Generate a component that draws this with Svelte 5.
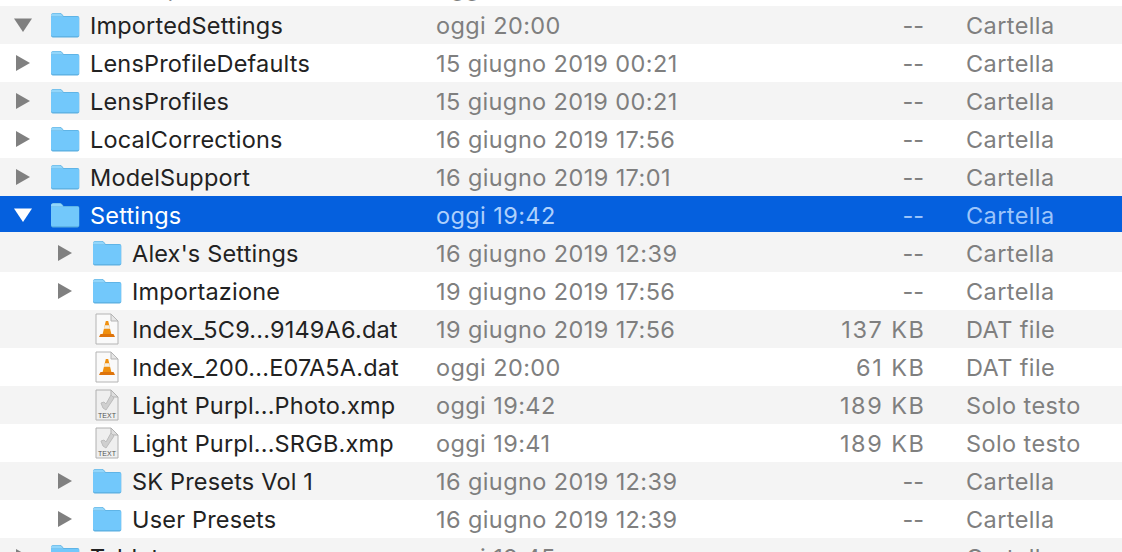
<script lang="ts">
	// Finder list view: one row per item, indented by depth
	type Row = {
		name: string;
		date: string;
		size: string;
		kind: string;
		icon: 'folder' | 'vlc' | 'text';
		depth: number;
		arrow?: 'open' | 'closed';
		selected?: boolean;
	};

	const rows: Row[] = [
		{ name: 'Develop', date: 'oggi 20:00', size: '--', kind: 'Cartella', icon: 'folder', depth: 0, arrow: 'closed' },
		{ name: 'ImportedSettings', date: 'oggi 20:00', size: '--', kind: 'Cartella', icon: 'folder', depth: 0, arrow: 'open' },
		{ name: 'LensProfileDefaults', date: '15 giugno 2019 00:21', size: '--', kind: 'Cartella', icon: 'folder', depth: 0, arrow: 'closed' },
		{ name: 'LensProfiles', date: '15 giugno 2019 00:21', size: '--', kind: 'Cartella', icon: 'folder', depth: 0, arrow: 'closed' },
		{ name: 'LocalCorrections', date: '16 giugno 2019 17:56', size: '--', kind: 'Cartella', icon: 'folder', depth: 0, arrow: 'closed' },
		{ name: 'ModelSupport', date: '16 giugno 2019 17:01', size: '--', kind: 'Cartella', icon: 'folder', depth: 0, arrow: 'closed' },
		{ name: 'Settings', date: 'oggi 19:42', size: '--', kind: 'Cartella', icon: 'folder', depth: 0, arrow: 'open', selected: true },
		{ name: "Alex's Settings", date: '16 giugno 2019 12:39', size: '--', kind: 'Cartella', icon: 'folder', depth: 1, arrow: 'closed' },
		{ name: 'Importazione', date: '19 giugno 2019 17:56', size: '--', kind: 'Cartella', icon: 'folder', depth: 1, arrow: 'closed' },
		{ name: 'Index_5C9...9149A6.dat', date: '19 giugno 2019 17:56', size: '137 KB', kind: 'DAT file', icon: 'vlc', depth: 1 },
		{ name: 'Index_200...E07A5A.dat', date: 'oggi 20:00', size: '61 KB', kind: 'DAT file', icon: 'vlc', depth: 1 },
		{ name: 'Light Purpl...Photo.xmp', date: 'oggi 19:42', size: '189 KB', kind: 'Solo testo', icon: 'text', depth: 1 },
		{ name: 'Light Purpl...SRGB.xmp', date: 'oggi 19:41', size: '189 KB', kind: 'Solo testo', icon: 'text', depth: 1 },
		{ name: 'SK Presets Vol 1', date: '16 giugno 2019 12:39', size: '--', kind: 'Cartella', icon: 'folder', depth: 1, arrow: 'closed' },
		{ name: 'User Presets', date: '16 giugno 2019 12:39', size: '--', kind: 'Cartella', icon: 'folder', depth: 1, arrow: 'closed' },
		{ name: 'Tablet', date: 'oggi 19:45', size: '--', kind: 'Cartella', icon: 'folder', depth: 0, arrow: 'closed' }
	];
</script>

<div class="window">
	<div class="list">
		{#each rows as row, i}
			<div class="row" class:odd={i % 2 === 1} class:selected={row.selected}>
				<div class="name" class:nested={row.depth === 1}>
					<span class="arrow">
						{#if row.arrow === 'open'}
							<svg width="20" height="16" viewBox="0 0 20 16"><path d="M1 1.5h18L10 15z" /></svg>
						{:else if row.arrow === 'closed'}
							<svg width="16" height="18" viewBox="0 0 16 18"><path d="M1 1l14 8-14 8z" /></svg>
						{/if}
					</span>
					{#if row.icon === 'folder'}
						<svg class="icon" width="30" height="26" viewBox="0 0 30 26">
							<path d="M1 3.500C1 2 2 1 3.200 1h6.600c1 0 1.500.4 2.200 1.100L13.600 4H27.400C28.500 4 29.300 4.800 29.300 6v17.600c0 1-.8 1.800-1.800 1.800H2.800C1.800 25.400 1 24.600 1 23.600z" fill="#5aaedf" />
							<path d="M1 5.500C1 5 1.400 4.800 2 4.800h25.500c1 0 1.500.5 1.500 1.500v16.500c0 1-.6 1.500-1.500 1.500H2.800C1.700 24.300 1 23.700 1 22.800z" fill="#72c8fb" />
							<path d="M1 3.500C1 2.200 2 1.400 3.200 1.400h6.400c.9 0 1.400.4 2 1L13.400 4.600 1 4.600z" fill="#92d6fb" />
						</svg>
					{:else if row.icon === 'vlc'}
						<svg class="icon doc" width="24" height="32" viewBox="0 0 24 32">
							<path d="M1 1h15l7 7v23H1z" fill="#fafafa" stroke="#b4b4b4" />
							<path d="M16 1v7h7z" fill="#e6e6e6" stroke="#b4b4b4" stroke-linejoin="round" />
							<path d="M10.800 8h2.400l3.400 14H7.400z" fill="#f0900f" />
							<path d="M9.800 12.200h4.400l.9 3.600H8.900z" fill="#f4eee2" />
							<path d="M5.500 21h13l1.500 3H4z" fill="#de740c" />
						</svg>
					{:else}
						<svg class="icon doc" width="24" height="32" viewBox="0 0 24 32">
							<path d="M1 1h15l7 7v23H1z" fill="#efefef" stroke="#b0b0b0" />
							<path d="M16 1v7h7z" fill="#dedede" stroke="#b0b0b0" stroke-linejoin="round" />
							<path d="M16 6l3 3-8 12-3-2-2-5 3-1 2 2z" fill="#cfcfcf" stroke="#bcbcbc" />
							<text x="12" y="28.500" text-anchor="middle" class="text-label">TEXT</text>
						</svg>
					{/if}
					<span class="label">{row.name}</span>
				</div>
				<div class="date">{row.date}</div>
				<div class="size" class:empty={row.size === '--'}>{row.size}</div>
				<div class="kind">{row.kind}</div>
			</div>
		{/each}
	</div>
</div>

<style>
	:global(body) {
		margin: 0;
		background: #fff;
	}
	.window {
		width: 1122px;
		height: 552px;
		overflow: hidden;
		font-family: Inter, "Liberation Sans", sans-serif;
		font-size: 23.5px;
		color: #7f7f7f;
	}
	.list {
		margin-top: -32px;
	}
	.row {
		display: grid;
		grid-template-columns: 436px 380px 108px 1fr;
		align-items: center;
		height: 38px;
		background: #fff;
		white-space: nowrap;
	}
	.row.odd {
		background: #f4f4f4;
	}
	/* the blue bar stops 2px short of the row's end */
	.row.selected {
		background: linear-gradient(#0560de 36px, #f4f4f4 36px);
		color: #9cc5fb;
	}
	.name {
		display: flex;
		align-items: center;
		color: #222;
		padding-left: 12px;
	}
	.name.nested {
		padding-left: 54px;
	}
	.label {
		padding-top: 1px;
		letter-spacing: 0.18px;
	}
	.date,
	.size,
	.kind {
		padding-top: 1px;
		letter-spacing: 0.4px;
	}
	.arrow {
		display: flex;
		justify-content: center;
		align-items: center;
		width: 22px;
		fill: #808080;
	}
	.icon {
		margin-left: 16px;
		margin-right: 10px;
		flex: none;
	}
	.icon.doc {
		margin-left: 19px;
		margin-right: 13px;
	}
	.text-label {
		font-family: "Liberation Sans", sans-serif;
		font-size: 7px;
		fill: #555;
	}
	.size {
		text-align: right;
		letter-spacing: 1.5px;
		margin-right: -1.5px;
	}
	.size.empty {
		letter-spacing: 0;
		margin-right: 0;
	}
	.kind {
		padding-left: 42px;
	}
	.selected .name {
		color: #fff;
	}
	.selected .date {
		color: #aed0fc;
	}
	.selected .arrow {
		fill: #fff;
	}
</style>
